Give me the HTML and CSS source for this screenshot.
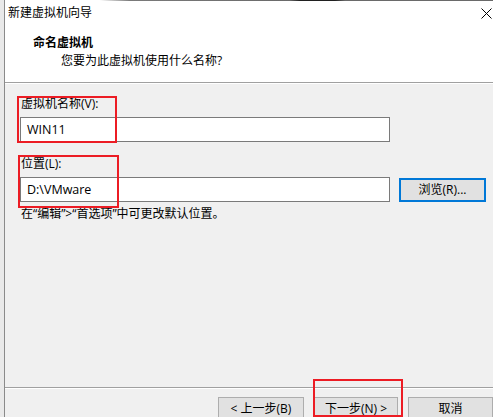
FILE: index.html
```html
<!DOCTYPE html>
<html lang="zh-CN">
<head>
<meta charset="utf-8">
<title>新建虚拟机向导</title>
<link rel="stylesheet" href="styles.css">
</head>
<body>
<div class="window">
  <div class="topline"></div>
  <div class="titlebar">
    <span class="title">新建虚拟机向导</span>
    <svg class="close" width="11" height="11" viewBox="0 0 11 11"><path d="M0.5 0.5 L10.5 10.5 M10.5 0.5 L0.5 10.5" stroke="#000" stroke-width="1" fill="none"/></svg>
  </div>
  <div class="header">
    <div class="h-title">命名虚拟机</div>
    <div class="h-sub">您要为此虚拟机使用什么名称?</div>
  </div>
  <div class="sep"></div>
  <div class="content">
    <div class="label">虚拟机名称(V):</div>
    <div class="row">
      <div class="input">WIN11</div>
    </div>
    <div class="label label2">位置(L):</div>
    <div class="row">
      <div class="input">D:\VMware</div>
      <div class="btn browse">浏览(R)...</div>
    </div>
    <div class="hint">在“编辑”&gt;“首选项”中可更改默认位置。</div>
  </div>
  <div class="footer">
    <div class="sep"></div>
    <div class="buttons">
      <div class="btn b-prev">&lt; 上一步(B)</div>
      <div class="btn b-next">下一步(N) &gt;</div>
      <div class="btn b-cancel">取消</div>
    </div>
  </div>
  <div class="mark mark1"></div>
  <div class="mark mark2"></div>
  <div class="mark mark3"></div>
</div>
</body>
</html>
```
FILE: styles.css
```css
html, body {
  margin: 0;
  padding: 0;
}
body {
  width: 493px;
  height: 417px;
  overflow: hidden;
  background: #e9e9e9;
  font-family: "Open Sans", "Noto Sans CJK SC", sans-serif;
  font-size: 12px;
  color: #000;
}
.window {
  position: relative;
  margin-left: 4px;
  width: 488px;
  height: 417px;
  overflow: hidden;
  border-left: 1px solid #8a8a8a;
  background: #f0f0f0;
  display: flex;
  flex-direction: column;
}
.topline {
  height: 1px;
  background: linear-gradient(to right, #ffffff 0, #ffffff 95px, #7a7a7a 125px, #6a6a6a 285px, #202020 295px, #202020 330px, #6a6a6a 340px, #6a6a6a 488px);
}
.titlebar {
  height: 28px;
  background: #fff;
  display: flex;
  align-items: flex-start;
  justify-content: space-between;
  padding-left: 3px;
  padding-right: 1px;
}
.title {
  line-height: 16px;
  padding-top: 4px;
}
.close {
  margin-top: 7px;
}
.header {
  background: #fff;
  height: 53px;
  padding-top: 6px;
  box-sizing: border-box;
}
.h-title {
  font-weight: bold;
  line-height: 16px;
  padding-left: 28px;
}
.h-sub {
  line-height: 16px;
  margin-top: 2px;
  padding-left: 56px;
}
.sep {
  height: 1px;
  background: #a0a0a0;
  border-bottom: 1px solid #fff;
}
.content {
  flex: 1;
  padding-left: 15px;
  padding-top: 12px;
}
.label {
  line-height: 16px;
  padding-left: 1px;
}
.label2 {
  margin-top: 14px;
}
.row {
  display: flex;
  align-items: flex-start;
  gap: 9px;
  margin-top: 5px;
}
.input {
  width: 370px;
  height: 25px;
  box-sizing: border-box;
  border: 1px solid #7a7a7a;
  background: #fff;
  line-height: 23px;
  padding-left: 6px;
  font-size: 12.5px;
}
.btn {
  box-sizing: border-box;
  background: #e1e1e1;
  border: 1px solid #adadad;
  text-align: center;
  line-height: 21px;
  height: 23px;
}
.browse {
  width: 87px;
  height: 24px;
  margin-top: 1px;
  border: 2px solid #0078d7;
  line-height: 20px;
}
.hint {
  line-height: 16px;
  margin-top: 4px;
  padding-left: 1px;
}
.footer {
  height: 30px;
}
.buttons {
  display: flex;
  gap: 10px;
  padding-left: 213px;
  padding-top: 8px;
}
.b-prev { width: 86px; }
.b-next { width: 84px; }
.b-cancel { width: 85px; }
.mark {
  position: absolute;
  border: 2px solid #ec1c24;
  box-sizing: border-box;
}
.mark1 {
  left: 12px;
  top: 96px;
  width: 100px;
  height: 47px;
}
.mark2 {
  left: 13px;
  top: 155px;
  width: 101px;
  height: 53px;
}
.mark3 {
  left: 308px;
  top: 379px;
  width: 90px;
  height: 38px;
}
```
